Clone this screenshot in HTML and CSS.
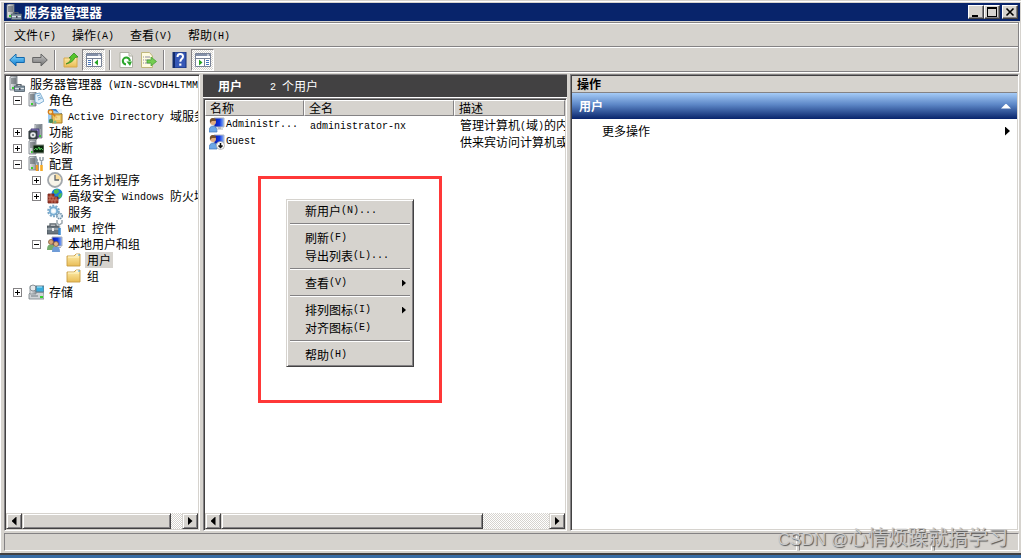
FILE: index.html
```html
<!DOCTYPE html>
<html lang="zh-CN">
<head>
<meta charset="utf-8">
<title>服务器管理器</title>
<link rel="stylesheet" href="styles.css">
</head>
<body>
<svg class="defs" aria-hidden="true">
  <defs>
    <linearGradient id="gFolder" x1="0" y1="0" x2="0" y2="1"><stop offset="0" stop-color="#fff0b0"/><stop offset="1" stop-color="#e9bc55"/></linearGradient>
    <linearGradient id="gBlue" x1="0" y1="0" x2="0" y2="1"><stop offset="0" stop-color="#8fe0ff"/><stop offset="1" stop-color="#0a78d0"/></linearGradient>
    <linearGradient id="gGrey" x1="0" y1="0" x2="0" y2="1"><stop offset="0" stop-color="#c8c8c8"/><stop offset="1" stop-color="#707070"/></linearGradient>
    <linearGradient id="gScreen" x1="0" y1="0" x2="1" y2="0"><stop offset="0" stop-color="#0818b0"/><stop offset=".55" stop-color="#1038e0"/><stop offset="1" stop-color="#90b8f8"/></linearGradient>
    <linearGradient id="gTower" x1="0" y1="0" x2="1" y2="0"><stop offset="0" stop-color="#eef0f2"/><stop offset="1" stop-color="#8e959b"/></linearGradient>
    <symbol id="tower" viewBox="0 0 16 16"><path d="M1 1l2-1h5v14H1z" fill="url(#gTower)" stroke="#727980" stroke-width=".8"/><path d="M2 3h5M2 5h5M2 7h5" stroke="#4c545b"/><path d="M3 11h2v2H3z" fill="#38d030"/></symbol>
    <symbol id="server" viewBox="0 0 16 16"><use href="#tower" width="16" height="16"/><path d="M8 10V8.500h4V10" fill="none" stroke="#59636c" stroke-width="1.200"/><path d="M5.500 10h10v5.500h-10z" fill="#8798a6" stroke="#4b5a66" stroke-width=".8"/><path d="M6 12.500h9" stroke="#dbe3e8"/><path d="M10 12h1.500v2H10z" fill="#445"/></symbol>
    <symbol id="roles" viewBox="0 0 16 16"><use href="#tower" width="16" height="16"/><path d="M7 2l5-1 4 8-5 3-4-2z" fill="#e3f1fb" stroke="#73a6cd" stroke-width=".9"/><path d="M9 4l3-1M10 6l3-1M10 8l4-2" stroke="#609cc9" stroke-width=".8"/></symbol>
    <symbol id="ad" viewBox="0 0 16 16"><path d="M1 1h14v14H1z" fill="#9cccf3"/><path d="M1 1h14v5L8 3z" fill="#3878c4"/><path d="M5 6h10v9H5z" fill="#e8c25c" stroke="#ac7d21"/><circle cx="3.5" cy="4" r="2.2" fill="#ffe399" stroke="#d77b16" stroke-width="1.3"/><path d="M5 5l5 5" stroke="#d77b16" stroke-width="1.5"/><path d="M9 1h6v4h-3z" fill="#e7f3fd"/><circle cx="4" cy="13" r="2.2" fill="#4b8b58"/><circle cx="8" cy="14" r="1.5" fill="#7db984"/><path d="M8 9h5M8 11h5" stroke="#fff0b8"/></symbol>
    <symbol id="features" viewBox="0 0 16 16"><path d="M7 0h7v14H7z" fill="url(#gTower)" stroke="#727980" stroke-width=".8"/><path d="M8 2h5M8 4h5" stroke="#59636c"/><path d="M3 5h8v8H3z" fill="#8a7fc5" stroke="#474176"/><path d="M1 7h8v8H1z" fill="#444d53" stroke="#293035"/><circle cx="5" cy="11" r="2.8" fill="#e7e9ea"/><circle cx="5" cy="11" r="1" fill="#596269"/><path d="M11 11h2v2h-2z" fill="#38d030"/></symbol>
    <symbol id="diag" viewBox="0 0 16 16"><use href="#tower" width="16" height="16"/><path d="M5 5h11v8H5z" fill="#0a250d" stroke="#828a82"/><path d="M6 10l2-2 1 2 2-3 1 3 1-2 2 2" fill="none" stroke="#55d15b" stroke-width=".9"/></symbol>
    <symbol id="config" viewBox="0 0 16 16"><use href="#tower" width="16" height="16"/><path d="M7 1l2 3-1 2 2 1v8" fill="none" stroke="#8b98a3" stroke-width="2"/><path d="M9 9v6" stroke="#f09b25" stroke-width="2.4"/><path d="M12 1v3l1.500 1L15 4V1M13.500 5v4" fill="none" stroke="#8b98a3" stroke-width="1.400"/><path d="M13.500 9v6" stroke="#f7ab25" stroke-width="2.600"/></symbol>
    <symbol id="clock" viewBox="0 0 16 16"><circle cx="8" cy="8" r="7" fill="#f8f4e9" stroke="#a3a8ad" stroke-width="1.800"/><path d="M8 8V2a6 6 0 0 1 6 6z" fill="#f9dda0"/><path d="M8 3v5h4" fill="none" stroke="#5e666e" stroke-width="1.300"/></symbol>
    <symbol id="firewall" viewBox="0 0 16 16"><circle cx="10" cy="6" r="5.500" fill="#1b82d8"/><path d="M7 2l4-1 1 3-3 2-2-1zM12 6l3-1-1 5-3-1z" fill="#50be4a"/><path d="M1 6h6v3h4v6H1z" fill="#9f3a29" stroke="#6f2218" stroke-width=".8"/><path d="M1 9h7M1 12h10M4 6v3M6 9v3M3 9v3M9 9v3M5 12v3M8 12v3" stroke="#d18d78" stroke-width=".7"/></symbol>
    <symbol id="services" viewBox="0 0 16 16"><circle cx="6.500" cy="7" r="5.300" fill="none" stroke="#79a7c8" stroke-width="2" stroke-dasharray="2 1.300"/><circle cx="6.500" cy="7" r="3.700" fill="#e3f2fa" stroke="#78add2" stroke-width="2"/><circle cx="6.500" cy="7" r="1.500" fill="#fff"/><circle cx="12.500" cy="12" r="2.700" fill="#dbeaf3" stroke="#6f91aa" stroke-width="1.600" stroke-dasharray="1.500 .7"/></symbol>
    <symbol id="wmi" viewBox="0 0 16 16"><path d="M3 6V4h6v2" fill="none" stroke="#5f6970" stroke-width="1.300"/><path d="M0 6h12v8H0z" fill="#69757e" stroke="#444e56" stroke-width=".8"/><path d="M0 9h12" stroke="#c9d0d5"/><path d="M5 8h2v3H5z" fill="#eee"/><path d="M10 0v3l2 2 3-2V0M12.500 4v5" fill="none" stroke="#9ca8af" stroke-width="1.500"/><path d="M12.500 8v7" stroke="#3b8bd0" stroke-width="2.500"/></symbol>
    <symbol id="users" viewBox="0 0 16 16"><path d="M5 1h10v9H5z" fill="url(#gScreen)" stroke="#a9afb9"/><path d="M9 11h5v1H9z" fill="#a9afb9"/><circle cx="4" cy="6" r="2.500" fill="#d6a476" stroke="#845b38" stroke-width=".8"/><path d="M0 14q0-6 4-5 4-1 4 5z" fill="#76ad6e"/><circle cx="9" cy="8" r="2.500" fill="#e1b489" stroke="#845b38" stroke-width=".8"/><path d="M5 16q0-6 4-5 4-1 4 5z" fill="#6f9cd7"/></symbol>
    <symbol id="folder" viewBox="0 0 16 16"><path d="M1 4h7l2-2h4v12H1z" fill="url(#gFolder)" stroke="#c89c42" stroke-width=".9"/><path d="M10 3h3" stroke="#fff" stroke-width="1.200"/><path d="M12 3h2" stroke="#49a5df"/><path d="M2 5h11" stroke="#fff5c9"/></symbol>
    <symbol id="storage" viewBox="0 0 16 16"><path d="M1 10l2-2h12l1 2v5H1z" fill="#cfd4d7" stroke="#747d84" stroke-width=".8"/><path d="M2 2h6v8H2z" fill="url(#gTower)" stroke="#828a90" stroke-width=".8"/><circle cx="5" cy="4" r="3" fill="#e6e9eb" stroke="#8a9298"/><path d="M8 2h8v6H8z" fill="#38acdc" stroke="#627985"/><path d="M9 3h5" stroke="#b6edff"/><path d="M3 12h7" stroke="#717a81"/><path d="M12 12h3v2h-3z" fill="#38d030"/></symbol>
    <symbol id="user" viewBox="0 0 16 16"><path d="M5 1h10v9H5z" fill="url(#gScreen)" stroke="#b2b7c1"/><path d="M9 10h3v2H9z" fill="#b8bcc5"/><path d="M8 12h6" stroke="#b2b7c1"/><circle cx="4" cy="5" r="3" fill="#dfac80"/><path d="M1 6q-1-5 3-5 3 0 3 3L3 4z" fill="#73502e"/><path d="M0 15q0-6 4-6 4 0 4 6z" fill="#6ca7e7" stroke="#3f76b8" stroke-width=".7"/></symbol>
    <symbol id="guest" viewBox="0 0 16 16"><use href="#user" width="16" height="16"/><circle cx="11.500" cy="11.500" r="4" fill="#fff" stroke="#9b9b9b" stroke-width=".7"/><path d="M11.500 9v4M9.500 11.500l2 2 2-2" fill="none" stroke="#111" stroke-width="1.500"/></symbol>
    <symbol id="back" viewBox="0 0 16 16"><path d="M.7 8L7 2v3.500h8.300v5H7V14z" fill="url(#gBlue)" stroke="#1268ad"/></symbol>
    <symbol id="forward" viewBox="0 0 16 16"><path d="M15.300 8L9 2v3.500H.7v5H9V14z" fill="url(#gGrey)" stroke="#656565"/></symbol>
    <symbol id="up" viewBox="0 0 16 16"><path d="M1 6h6l2-2h5v11H1z" fill="url(#gFolder)" stroke="#d8a84a"/><path d="M3 12q5-2 5-6h-2l5-5 4 4-3 .5q-2 5-9 6.500z" fill="#55c52a" stroke="#27831b" stroke-width=".7"/></symbol>
    <symbol id="paneLeft" viewBox="0 0 16 16"><path d="M.5 1.500h15v13H.5z" fill="#fff" stroke="#788296"/><path d="M1 3h14" stroke="#8490a8" stroke-width="2"/><path d="M12 3h2" stroke="#fff"/><path d="M1 6.500h14M6.500 7v7" stroke="#788296"/><path d="M2 8.500h3M2 10.500h3M2 12.500h3" stroke="#4375bd"/><path d="M12 7.500v6l-3.500-3z" fill="#24a322"/></symbol>
    <symbol id="paneRight" viewBox="0 0 16 16"><path d="M.5 1.500h15v13H.5z" fill="#fff" stroke="#788296"/><path d="M1 3h14" stroke="#8490a8" stroke-width="2"/><path d="M12 3h2" stroke="#fff"/><path d="M1 6.500h14M9.500 7v7" stroke="#788296"/><path d="M11 8.500h3M11 10.500h3M11 12.500h3" stroke="#4375bd"/><path d="M4 7.500v6l3.500-3z" fill="#24a322"/></symbol>
    <symbol id="refresh" viewBox="0 0 16 16"><path d="M2 .5h9L14.500 4v11.500H2z" fill="#fff" stroke="#b0b0a5"/><path d="M11 .5V4h3.500" fill="#e4e4dc" stroke="#b0b0a5"/><path d="M8 12.500a3.500 3.500 0 1 1 3.800-3.500" fill="none" stroke="#2ba52b" stroke-width="2"/><path d="M8.500 9.500h5.500L12 14z" fill="#2ba52b"/></symbol>
    <symbol id="export" viewBox="0 0 16 16"><path d="M.5.500h8L11.500 4v11.500H.5z" fill="#fffbe0" stroke="#c0b77d"/><path d="M2 5h1m1 0h5M2 8h1m1 0h5M2 11h1m1 0h5" stroke="#8d8aa2"/><path d="M6 8h4V5l5.500 4.500L10 14v-3H6z" fill="#75cd51" stroke="#3e9b30" stroke-width=".7"/></symbol>
    <symbol id="help" viewBox="0 0 16 16"><path d="M1 0h13v16H1z" fill="#3658b7" stroke="#173176"/><path d="M2 0v16" stroke="#132c6c" stroke-width="2"/><path d="M5.500 5q0-3 2.800-3T11 4.700c0 2-2.700 2.300-2.700 5" fill="none" stroke="#fff" stroke-width="2"/><path d="M7.200 11.500h2.200v2.200H7.200z" fill="#fff"/></symbol>
  </defs>
</svg>
<div class="window">
  <header class="titlebar">
    <svg class="icon"><use href="#server"/></svg>
    <h1 class="title">服务器管理器</h1>
    <div class="winbtns">
      <button class="winbtn" aria-label="最小化"><svg class="glyph" viewBox="0 0 10 10"><path d="M1 8h6v2H1z"/></svg></button>
      <button class="winbtn" aria-label="最大化"><svg class="glyph" viewBox="0 0 10 10"><path d="M0 0h10v10H0zM1 2v7h8V2z" fill-rule="evenodd"/></svg></button>
      <button class="winbtn close" aria-label="关闭"><svg class="glyph" viewBox="0 0 10 10"><path d="M1.500 1.500l7 7M8.500 1.500l-7 7" fill="none" stroke="#000" stroke-width="1.600"/></svg></button>
    </div>
  </header>
  <div class="bars">
    <nav class="menubar">
      <button class="menubtn">文件<span class="la">(F)</span></button>
      <button class="menubtn">操作<span class="la">(A)</span></button>
      <button class="menubtn">查看<span class="la">(V)</span></button>
      <button class="menubtn">帮助<span class="la">(H)</span></button>
    </nav>
    <div class="toolbar">
      <button class="tool" aria-label="后退"><svg class="icon"><use href="#back"/></svg></button>
      <button class="tool" aria-label="前进"><svg class="icon"><use href="#forward"/></svg></button>
      <span class="divider"></span>
      <button class="tool" aria-label="向上"><svg class="icon"><use href="#up"/></svg></button>
      <button class="tool pressed" aria-label="控制台树"><svg class="icon"><use href="#paneLeft"/></svg></button>
      <span class="divider near"></span>
      <button class="tool" aria-label="刷新"><svg class="icon"><use href="#refresh"/></svg></button>
      <button class="tool" aria-label="导出列表"><svg class="icon"><use href="#export"/></svg></button>
      <span class="divider"></span>
      <button class="tool" aria-label="帮助"><svg class="icon"><use href="#help"/></svg></button>
      <button class="tool pressed" aria-label="操作窗格"><svg class="icon"><use href="#paneRight"/></svg></button>
    </div>
  </div>
  <main class="panes">
    <section class="pane tree-pane">
      <ul class="tree">
        <li class="node root"><svg class="icon"><use href="#server"/></svg><span class="label">服务器管理器<span class="la"> (WIN-SCVDH4LTMM</span></span></li>
        <li class="node"><button class="exp" aria-label="折叠"></button><svg class="icon"><use href="#roles"/></svg><span class="label">角色</span></li>
        <li class="node l2 leaf"><svg class="icon"><use href="#ad"/></svg><span class="label"><span class="la">Active Directory </span>域服务</span></li>
        <li class="node"><button class="exp plus" aria-label="展开"></button><svg class="icon"><use href="#features"/></svg><span class="label">功能</span></li>
        <li class="node"><button class="exp plus" aria-label="展开"></button><svg class="icon"><use href="#diag"/></svg><span class="label">诊断</span></li>
        <li class="node"><button class="exp" aria-label="折叠"></button><svg class="icon"><use href="#config"/></svg><span class="label">配置</span></li>
        <li class="node l2"><button class="exp plus" aria-label="展开"></button><svg class="icon"><use href="#clock"/></svg><span class="label">任务计划程序</span></li>
        <li class="node l2"><button class="exp plus" aria-label="展开"></button><svg class="icon"><use href="#firewall"/></svg><span class="label">高级安全<span class="la"> Windows </span>防火墙</span></li>
        <li class="node l2 leaf"><svg class="icon"><use href="#services"/></svg><span class="label">服务</span></li>
        <li class="node l2 leaf"><svg class="icon"><use href="#wmi"/></svg><span class="label"><span class="la">WMI </span>控件</span></li>
        <li class="node l2"><button class="exp" aria-label="折叠"></button><svg class="icon"><use href="#users"/></svg><span class="label">本地用户和组</span></li>
        <li class="node l3 leaf"><svg class="icon"><use href="#folder"/></svg><span class="label selected">用户</span></li>
        <li class="node l3 leaf"><svg class="icon"><use href="#folder"/></svg><span class="label">组</span></li>
        <li class="node"><button class="exp plus" aria-label="展开"></button><svg class="icon"><use href="#storage"/></svg><span class="label">存储</span></li>
      </ul>
      <div class="scroll">
        <button class="sbtn" aria-label="向左"><span class="tri left"></span></button>
        <div class="track"><div class="thumb" style="width:93%"></div></div>
        <button class="sbtn" aria-label="向右"><span class="tri right"></span></button>
      </div>
    </section>
    <section class="center">
      <div class="caption"><h2 class="cap-title">用户</h2><span><span class="la">2 </span>个用户</span></div>
      <div class="pane list-pane">
        <div class="list">
          <table class="grid">
            <colgroup><col class="c-name"><col class="c-full"><col></colgroup>
            <thead><tr><th>名称</th><th>全名</th><th>描述</th></tr></thead>
            <tbody>
              <tr><td><span class="who"><svg class="icon"><use href="#user"/></svg><span class="la">Administr...</span></span></td><td><span class="la">administrator-nx</span></td><td>管理计算机<span class="la">(</span>域<span class="la">)</span>的内</td></tr>
              <tr><td><span class="who"><svg class="icon"><use href="#guest"/></svg><span class="la">Guest</span></span></td><td></td><td>供来宾访问计算机或</td></tr>
            </tbody>
          </table>
        </div>
        <div class="scroll">
          <button class="sbtn" aria-label="向左"><span class="tri left"></span></button>
          <div class="track"><div class="thumb" style="width:80%"></div></div>
          <button class="sbtn" aria-label="向右"><span class="tri right"></span></button>
        </div>
        <div class="marker">
          <div class="context" role="menu">
            <button class="item" role="menuitem">新用户<span class="la">(N)...</span></button>
            <hr class="rule">
            <button class="item" role="menuitem">刷新<span class="la">(F)</span></button>
            <button class="item" role="menuitem">导出列表<span class="la">(L)...</span></button>
            <hr class="rule">
            <button class="item" role="menuitem">查看<span class="la">(V)</span><span class="tri right sub"></span></button>
            <hr class="rule">
            <button class="item" role="menuitem">排列图标<span class="la">(I)</span><span class="tri right sub"></span></button>
            <button class="item" role="menuitem">对齐图标<span class="la">(E)</span></button>
            <hr class="rule">
            <button class="item" role="menuitem">帮助<span class="la">(H)</span></button>
          </div>
        </div>
      </div>
    </section>
    <section class="pane actions">
      <h2 class="act-head">操作</h2>
      <button class="act-group">用户<span class="tri up"></span></button>
      <button class="act-more">更多操作<span class="tri right"></span></button>
    </section>
  </main>
  <footer class="status"><div class="cell wide"></div><div class="cell mid"></div><div class="cell"></div><div class="watermark"><span class="wm-la">CSDN @</span>心情烦躁就搞学习</div></footer>
</div>
</body>
</html>
```
FILE: styles.css
```css
* { box-sizing: border-box; }
body {
  margin: 0;
  height: 100vh;
  display: flex;
  flex-direction: column;
  background: #396da5;
  padding-bottom: 3px;
  color: #000;
  font: 12px/16px "Noto Sans CJK SC", sans-serif;
  overflow: hidden;
}
button { font: inherit; color: inherit; border: 0; margin: 0; padding: 0; background: none; text-align: left; white-space: nowrap; }
h1, h2 { margin: 0; }
.defs { position: absolute; width: 0; height: 0; }
.la { font: 10px/12px "Liberation Mono", monospace; vertical-align: 1px; white-space: pre; }
.icon { width: 16px; height: 16px; flex: none; display: block; }

.window {
  flex: 1;
  min-height: 0;
  display: flex;
  flex-direction: column;
  background: #d6d3ce;
  padding: 3px 1px 2px 4px;
  border-bottom: 2px solid #424142;
  box-shadow: inset 0 1px #d6d3ce, inset 1px 2px #fff;
}
.titlebar { display: flex; align-items: center; height: 18px; padding: 0 2px; background: #08246b; color: #fff; flex: none; }
.title { font-size: 13px; line-height: 18px; font-weight: bold; margin-left: 2px; flex: 1; }
.winbtns { display: flex; }
.winbtn { width: 16px; height: 14px; background: #d6d3ce; border: 1px solid; border-color: #fff #424142 #424142 #fff; box-shadow: inset -1px -1px #848284; display: grid; place-items: center; }
.close { margin-left: 2px; }
.glyph { width: 10px; height: 10px; }

.bars { border: 1px solid #848284; margin: 1px 1px 0 0; flex: none; box-shadow: inset 1px 1px #fff, 1px 1px #fff; }
.menubar { display: flex; gap: 16px; height: 24px; padding: 0 9px; align-items: center; border-bottom: 1px solid #848284; }
.toolbar { display: flex; align-items: center; height: 24px; border-top: 1px solid #fff; }
.tool { width: 23px; height: 22px; display: grid; place-items: center; }
.pressed { border: 1px solid; border-color: #848284 #fff #fff #848284; background: repeating-conic-gradient(#fff 0 25%, #d6d3ce 0 50%) 0 0 / 2px 2px; }
.divider { width: 2px; height: 20px; margin: 0 3px; border-left: 1px solid #848284; border-right: 1px solid #fff; }
.near { margin-left: 4px; }

.panes { flex: 1; min-height: 0; display: grid; grid-template-columns: 196px minmax(0, 364fr) minmax(0, 449fr); column-gap: 3px; margin: 2px 1px 0 0; }
.pane { min-height: 0; min-width: 0; border: 1px solid; border-color: #848284 #fff #fff #848284; box-shadow: inset 1px 1px #424142, inset -1px -1px #d6d3ce; background: #fff; padding: 1px; display: flex; flex-direction: column; }
.tree { flex: 1; min-height: 0; margin: 0; padding: 0; list-style: none; overflow: hidden; }
.node { display: flex; align-items: center; height: 16px; padding-left: 7px; white-space: nowrap; }
.root { padding-left: 3px; }
.root .label { margin-left: 3px; }
.l2 { padding-left: 26px; }
.l3 { padding-left: 45px; }
.leaf::before { content: ""; width: 15px; flex: none; }
.label { margin-left: 3px; padding: 0 2px; line-height: 16px; }
.selected { background: #d6d3ce; }
.exp { width: 9px; height: 9px; margin-right: 6px; flex: none; border: 1px solid #848284; background: linear-gradient(#000, #000) center / 5px 1px no-repeat; }
.plus { background: linear-gradient(#000, #000) center / 5px 1px no-repeat, linear-gradient(#000, #000) center / 1px 5px no-repeat; }

.scroll { display: flex; height: 16px; flex: none; }
.sbtn, .thumb { background: #d6d3ce; border: 1px solid; border-color: #d6d3ce #424142 #424142 #d6d3ce; box-shadow: inset 1px 1px #fff, inset -1px -1px #848284; }
.sbtn { width: 16px; display: grid; place-items: center; flex: none; }
.track { flex: 1; background: repeating-conic-gradient(#fff 0 25%, #d6d3ce 0 50%) 0 0 / 2px 2px; }
.thumb { height: 16px; }
.tri { width: 5px; height: 9px; background: currentColor; display: block; flex: none; }
.tri.right { clip-path: polygon(0 0, 100% 50%, 0 100%); }
.tri.left { clip-path: polygon(100% 0, 0 50%, 100% 100%); }
.tri.up { width: 10px; height: 5px; clip-path: polygon(50% 0, 100% 100%, 0 100%); }

.center { display: flex; flex-direction: column; min-width: 0; min-height: 0; }
.caption { display: flex; align-items: center; gap: 28px; height: 24px; padding: 0 15px; background: #424142; color: #fff; border-bottom: 1px solid #fff; border-top: 1px solid #848284; flex: none; }
.cap-title, .act-head { font-size: 12px; line-height: 16px; font-weight: bold; }
.list-pane { flex: 1; position: relative; }
.list { flex: 1; min-height: 0; overflow: hidden; }
.grid { width: 100%; table-layout: fixed; border-collapse: separate; border-spacing: 0; }
.c-name { width: 99px; }
.c-full { width: 150px; }
.grid th { height: 16px; padding: 0 4px; font-weight: normal; text-align: left; line-height: 14px; background: #d6d3ce; border: 1px solid; border-color: #fff #848284 #848284 #fff; }
.grid td { height: 17px; padding: 0 0 0 6px; white-space: nowrap; overflow: hidden; line-height: 16px; }
.grid td:first-child { padding-left: 4px; }
.who { display: flex; align-items: center; gap: 1px; }

.marker { position: absolute; left: 54px; top: 77px; width: 184px; border: 3px solid #ff3838; padding: 20px 25px 33px; }
.context { background: #d6d3ce; border: 1px solid; border-color: #d6d3ce #424142 #424142 #d6d3ce; box-shadow: inset 1px 1px #fff, inset -1px -1px #848284; padding: 2px; display: flex; flex-direction: column; }
.item { display: flex; align-items: center; height: 18px; padding: 0 5px 0 16px; }
.sub { margin-left: auto; height: 7px; width: 4px; }
.rule { height: 2px; width: 120px; margin: 3px 1px 4px; border: 0; border-top: 1px solid #848284; border-bottom: 1px solid #fff; }

.act-head { height: 17px; padding-left: 5px; background: #d6d3ce; border-bottom: 1px solid #848284; flex: none; }
.act-group { display: flex; align-items: center; justify-content: space-between; height: 26px; padding: 0 6px 0 7px; font-weight: bold; color: #fff; background: linear-gradient(#a5cbf7, #5c86c6 45%, #08246b); }
.act-more { display: flex; align-items: center; justify-content: space-between; height: 24px; padding: 0 7px 0 30px; }

.status { display: flex; gap: 2px; height: 18px; margin: 2px 1px 0 0; flex: none; position: relative; }
.cell { flex: 84; border: 1px solid; border-color: #848284 #fff #fff #848284; }
.wide { flex: 796; }
.mid { flex: 132; }
.watermark { position: absolute; right: 11px; top: -9px; font: 20px/26px "Noto Sans CJK SC", sans-serif; color: #c9c9c9; text-shadow: 1px 1px 1px #555; white-space: nowrap; }
.wm-la { font: 17px/26px "Liberation Sans", sans-serif; }
```
